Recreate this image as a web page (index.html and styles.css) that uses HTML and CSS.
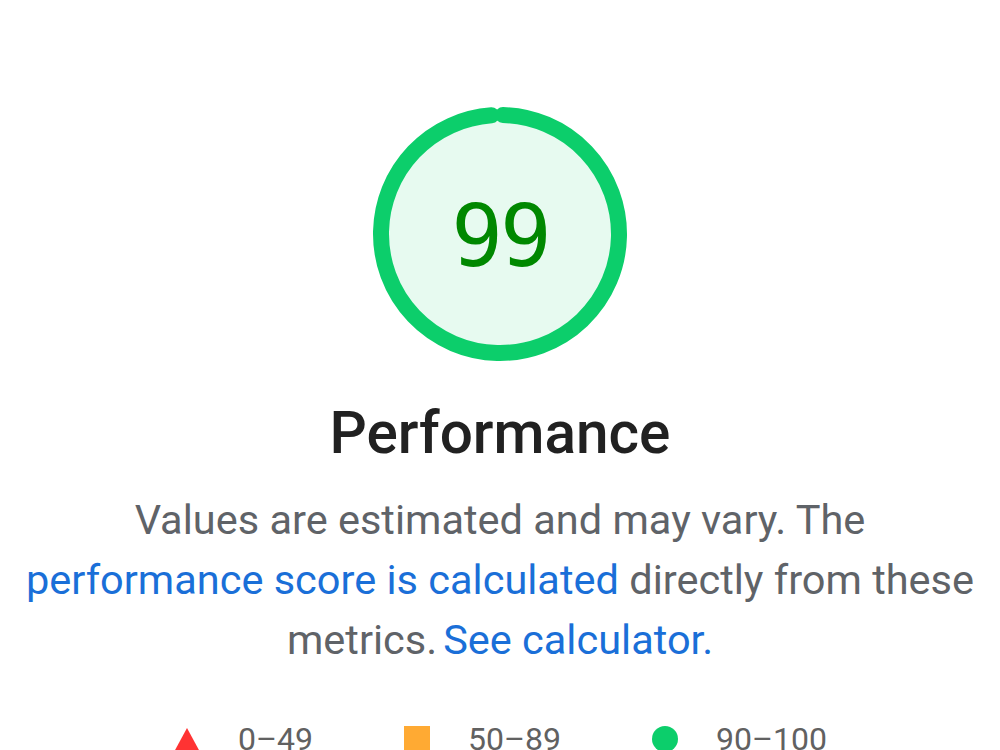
FILE: index.html
```html
<!DOCTYPE html>
<html lang="en">
<head>
<meta charset="utf-8">
<title>Performance</title>
<link rel="stylesheet" href="styles.css">
</head>
<body>
<main class="category">
  <div class="gauge">
    <svg class="gauge-svg" viewBox="0 0 256 256" width="256" height="256">
      <circle class="gauge-base" cx="128" cy="128" r="119"></circle>
      <circle class="gauge-arc" cx="128" cy="128" r="119" transform="rotate(-88.6 128 128)" style="stroke-dasharray: 736 747.7"></circle>
    </svg>
    <div class="gauge-value">99</div>
  </div>
  <h1 class="gauge-label">Performance</h1>
  <p class="description">Values are estimated and may vary. The <a href="#">performance score is calculated</a> directly from these metrics.<a class="calc-link" href="#">See calculator.</a></p>
  <div class="legend">
    <span class="legend-item"><svg class="legend-icon" viewBox="0 0 28 28" width="28" height="28"><polygon class="fail" points="14,3 27,27 1,27"></polygon></svg>0–49</span>
    <span class="legend-item"><svg class="legend-icon" viewBox="0 0 28 28" width="28" height="28"><rect class="average" x="1" y="1" width="26" height="26"></rect></svg>50–89</span>
    <span class="legend-item"><svg class="legend-icon" viewBox="0 0 28 28" width="28" height="28"><circle class="pass" cx="14" cy="14" r="13"></circle></svg>90–100</span>
  </div>
</main>
</body>
</html>
```
FILE: styles.css
```css
html, body {
  margin: 0;
  padding: 0;
  background: #ffffff;
}

body {
  font-family: Roboto, "Liberation Sans", Arial, sans-serif;
  overflow: hidden;
}

.category {
  display: flex;
  flex-direction: column;
  align-items: center;
  padding: 106px 20px 0;
  text-align: center;
}

.gauge {
  position: relative;
  width: 256px;
  height: 256px;
}

.gauge-svg {
  display: block;
}

.gauge-base {
  fill: #e7faf0;
  stroke: none;
}

.gauge-arc {
  fill: none;
  stroke: #0cce6b;
  stroke-width: 16;
  stroke-linecap: round;
}

.gauge-value {
  position: absolute;
  inset: 0;
  display: flex;
  align-items: center;
  justify-content: center;
  font-family: "DejaVu Sans Mono", "Liberation Mono", monospace;
  font-size: 86px;
  color: #008800;
  letter-spacing: -3px;
  padding-top: 4px;
}

.gauge-label {
  margin: 37px 0 0;
  font-size: 58.5px;
  line-height: 68px;
  font-weight: 500;
  color: #212121;
}

.description {
  margin: 23px 0 0;
  font-size: 41.5px;
  line-height: 60px;
  color: #5f6368;
  max-width: 960px;
}

.description a {
  color: #1a6fd8;
  text-decoration: none;
}

.description .calc-link {
  margin-left: 6px;
}

.legend {
  display: flex;
  gap: 90px;
  margin-top: 49px;
  font-size: 32px;
  line-height: 40px;
  color: #616161;
}

.legend-item {
  display: flex;
  align-items: center;
  gap: 37px;
}

.legend-icon {
  display: block;
  flex: none;
}

.fail { fill: #ff3333; }
.average { fill: #ffaa33; }
.pass { fill: #0cce6b; }
```
